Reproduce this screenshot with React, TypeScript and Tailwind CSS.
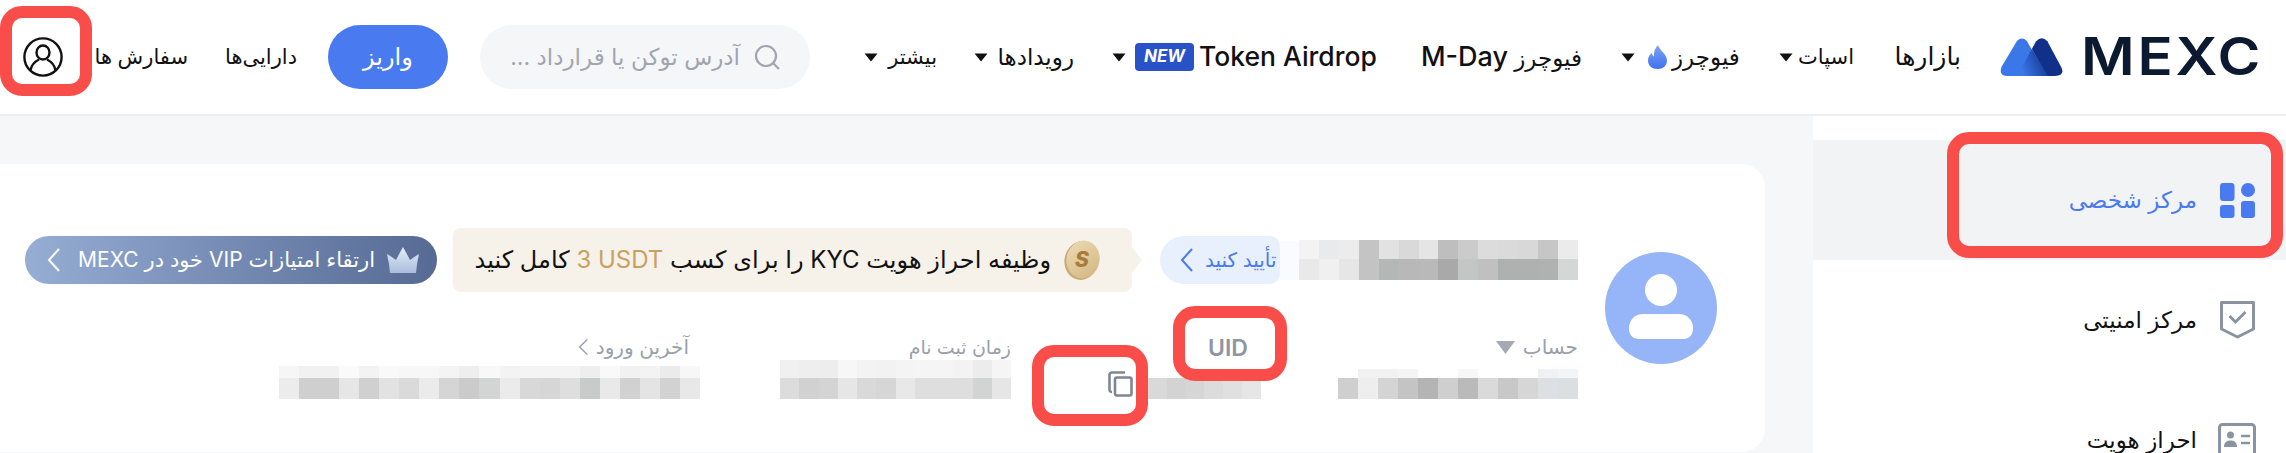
const FONT = "font-['Inter','DejaVu_Sans',sans-serif]";

function Caret({ className = "" }: { className?: string }) {
  return (
    <svg width="14" height="9" viewBox="0 0 14 9" className={`shrink-0 ${className}`}>
      <path d="M0.5 0.5H13.5L7 8.5Z" fill="#111" />
    </svg>
  );
}

function Mosaic({ top, bottom, topH, bottomH, width }: { top: string[]; bottom: string[]; topH: number; bottomH: number; width: number }) {
  const rows: [string[], number][] = [[top, topH], [bottom, bottomH]];
  return (
    <div className="flex flex-col blur-[0.6px]" style={{ width }}>
      {rows.map(([cells, h], i) => (
        <div key={i} className="flex" style={{ height: h }}>
          {cells.map((c, j) => (
            <div key={j} className="flex-1" style={{ background: c }} />
          ))}
        </div>
      ))}
    </div>
  );
}

function RedBox({ className }: { className: string }) {
  return <div className={`absolute border-[12px] border-[#f94d4a] rounded-[22px] ${className}`}><div className="w-full h-full" /></div>;
}

function Logo() {
  return (
    <div className="flex items-center ml-[39px] w-[262px] shrink-0">
      <svg width="63" height="38" viewBox="0 0 188 115" className="shrink-0">
        <defs>
          <linearGradient id="lg" x1="1" y1="0.3" x2="0" y2="0.7">
            <stop offset="0" stopColor="#10308a" />
            <stop offset="1" stopColor="#3b78e8" />
          </linearGradient>
        </defs>
        <path d="M3 88L50 9Q65-6 80 9L125 88 100 115H22Q-6 115 3 88Z" fill="#3a78ea" />
        <path d="M95 33L108 10Q125-8 142 10L185 90Q195 115 165 115H140Z" fill="#10308a" />
        <path d="M95 33L144 115H82Q52 113 65 88Z" fill="url(#lg)" />
      </svg>
      <span className="ml-[18px] origin-left scale-x-[1.12] text-[52px] leading-none font-semibold tracking-[2.5px] text-[#0b1a30] font-['Inter',sans-serif]">MEXC</span>
    </div>
  );
}

function Header() {
  return (
    <header className={`relative flex items-center h-[116px] bg-white border-b-2 border-[#eceef2] text-[23px] text-[#111] whitespace-nowrap ${FONT}`}>
      <svg width="40" height="40" viewBox="0 0 40 40" className="ml-[23px] shrink-0" fill="none" stroke="#111" strokeWidth="2.4">
        <circle cx="20" cy="20" r="18.6" />
        <ellipse cx="20" cy="15.5" rx="6.5" ry="7" />
        <path d="M7.5 33C9 26 13 24 16 22.5M32.5 33C31 26 27 24 24 22.5" />
      </svg>
      <div dir="rtl" className="ml-[31px] w-[94px] font-medium text-right text-[21px]">سفارش ها</div>
      <div dir="rtl" className="ml-[32px] w-[77px] font-medium text-right text-[21px]">دارایی‌ها</div>
      <div dir="rtl" className="ml-[31px] w-[120px] h-[64px] rounded-full bg-[#4a7af0] text-white font-medium text-[24px] flex items-center justify-center">واریز</div>
      <div className="ml-[32px] w-[330px] h-[64px] rounded-[32px] bg-[#f5f6f8] flex items-center justify-end pr-[30px] gap-[14px]">
        <span dir="rtl" className="text-[#a0a5b0] text-[23px] w-[232px] text-right">آدرس توکن یا قرارداد ...</span>
        <svg width="26" height="26" viewBox="0 0 26 26" fill="none" stroke="#a0a5b0" strokeWidth="2.2" className="shrink-0">
          <circle cx="12" cy="12" r="10" />
          <path d="M19.5 19.5L25 25" />
        </svg>
      </div>
      <div className="ml-[54px] w-[73px] flex items-center justify-between">
        <Caret />
        <span dir="rtl" className="text-[21px]">بیشتر</span>
      </div>
      <div className="ml-[37px] w-[100px] flex items-center justify-between">
        <Caret />
        <span dir="rtl">رویدادها</span>
      </div>
      <div className="ml-[38px] w-[265px] flex items-center">
        <Caret />
        <span className="ml-[9px] w-[59px] h-[28px] rounded-[4px] bg-[#2a52c8] text-white italic font-bold text-[17px] flex items-center justify-center">NEW</span>
        <span className="ml-[5px] font-medium text-[26.5px]">Token Airdrop</span>
      </div>
      <div dir="rtl" className="ml-[41px] w-[164px] text-right font-medium">
        <span>فیوچرز </span><span className="text-[27px]">M-Day</span>
      </div>
      <div className="ml-[39px] w-[119px] flex items-center">
        <Caret />
        <svg width="19" height="24" viewBox="0 0 19 24" className="ml-[13px] shrink-0">
          <defs>
            <linearGradient id="fl" x1="0" y1="0" x2="0" y2="1">
              <stop offset="0" stopColor="#7da4f8" />
              <stop offset="1" stopColor="#3f72ee" />
            </linearGradient>
          </defs>
          <path d="M10 0C11 5 19 9 19 15.5C19 20.5 15 24 9.5 24C4 24 0 20.5 0 15.5C0 12 2 9.5 3.5 8C4 10 5 11 6 11.5C5.500 7 7 3 10 0Z" fill="url(#fl)" />
        </svg>
        <span dir="rtl" className="ml-[5px]">فیوچرز</span>
      </div>
      <div className="ml-[39px] w-[75px] flex items-center justify-between">
        <Caret />
        <span dir="rtl" className="text-[21px]">اسپات</span>
      </div>
      <div dir="rtl" className="ml-[41px] w-[66px] text-right text-[25px]">بازارها</div>
      <Logo />
      <RedBox className="left-0 top-[6px] w-[92px] h-[90px]" />
    </header>
  );
}

function Chevron({ color, w = 14, h = 26, dir = "left" }: { color: string; w?: number; h?: number; dir?: string }) {
  return (
    <svg width={w} height={h} viewBox="0 0 14 26" fill="none" stroke={color} strokeWidth="2" className="shrink-0" preserveAspectRatio="none">
      <path d={dir === "left" ? "M12 2L2 13L12 24" : "M2 2L12 13L2 24"} />
    </svg>
  );
}

function Card() {
  return (
    <div className="relative flex-1 flex bg-white rounded-r-[24px] h-[288px] mt-[48px] mr-[48px] mb-[1px]">
      <div className="w-[1605px] shrink-0 flex flex-col pt-[64px]">
        <div className="flex items-center h-[64px]">
          <div className="ml-[25px] w-[412px] h-[48px] rounded-[24px] bg-gradient-to-r from-[#96add4] to-[#566a94] flex items-center text-white text-[21px] pl-[22px]">
            <Chevron color="#fff" />
            <span dir="rtl" className="ml-[17px] w-[297px] text-right whitespace-nowrap">ارتقاء امتیازات VIP خود در MEXC</span>
            <svg width="32" height="26" viewBox="0 0 32 26" className="ml-[12px] shrink-0">
              <defs>
                <linearGradient id="cr" x1="0" y1="0" x2="0" y2="1">
                  <stop offset="0" stopColor="#e6ecf6" />
                  <stop offset="1" stopColor="#a9bddc" />
                </linearGradient>
              </defs>
              <path d="M3 26Q2 15 0 7Q5 10 9 13Q12 7 16 0Q20 7 23 13Q27 10 32 7Q30 15 29 26Z" fill="url(#cr)" />
            </svg>
          </div>
          <div className="ml-[16px] w-[679px] h-[64px] rounded-[8px] bg-[#f6f2ea] flex items-center justify-end pr-[31px] shrink-0">
            <span dir="rtl" className="text-[24px] text-[#111] whitespace-nowrap">
              وظیفه احراز هویت KYC را برای کسب <span dir="ltr" className="inline-block text-[#c9a05f]">3 USDT</span> کامل کنید
            </span>
            <svg width="38" height="40" viewBox="0 0 38 40" className="ml-[12px] shrink-0">
              <defs>
                <linearGradient id="cn" x1="0" y1="0" x2="1" y2="1">
                  <stop offset="0" stopColor="#ecdcb5" />
                  <stop offset="1" stopColor="#d3b57e" />
                </linearGradient>
              </defs>
              <ellipse cx="18.500" cy="20.500" rx="17" ry="19.500" fill="#c8aa74" transform="rotate(12 18.500 20.500)" />
              <ellipse cx="20" cy="19.500" rx="16.500" ry="19" fill="url(#cn)" transform="rotate(12 20 19.500)" />
              <text x="19" y="27" textAnchor="middle" fontSize="21" fontWeight="800" fontStyle="italic" fill="#a87b3c" fontFamily="Inter, sans-serif">S</text>
            </svg>
          </div>
          <div className="w-0 h-0 border-y-[13px] border-y-transparent border-l-[10px] border-l-[#f6f2ea] shrink-0" />
          <div className="ml-[18px] w-[120px] h-[48px] rounded-l-[24px] rounded-r-[10px] bg-[#e9f0fd] flex items-center pl-[20px] gap-[11px] shrink-0">
            <Chevron color="#4a7af0" />
            <span dir="rtl" className="text-[20px] text-[#4a7af0] whitespace-nowrap">تأیید کنید</span>
          </div>
          <div className="w-[19px] h-[39px] bg-[#f9fbff] shrink-0" />
          <Mosaic
            width={279}
            topH={19}
            bottomH={21}
            top={["#f3f3f3", "#e9eaec", "#ececec", "#c4c4c4", "#e2e2e2", "#d9d9d9", "#e5e5e5", "#bebebe", "#cbcbcb", "#dcdcdc", "#dadada", "#d8d8d8", "#c6c6c6", "#ebebeb"]}
            bottom={["#e9e9ea", "#f0f0f1", "#e6e6e6", "#c3c3c3", "#b5b7b6", "#b8b8b8", "#b9b9b9", "#a9a9a9", "#c4c6c5", "#c0c0c0", "#afb1b0", "#afb1b0", "#b0b2b1", "#d4d7d6"]}
          />
        </div>
        <div className="flex items-end mt-[44px] h-[63px]">
          <div className="ml-[279px] w-[420px] flex flex-col shrink-0">
            <div className="flex items-center justify-end gap-[7px] text-[20px] leading-[20px] text-[#9aa0ac] pr-[10px] mb-[9px]">
              <Chevron color="#9aa0ac" w={11} h={18} />
              <span dir="rtl">آخرین ورود</span>
            </div>
            <Mosaic
              width={421}
              topH={12}
              bottomH={21}
              top={["#f6f6f6", "#f1f1f1", "#f1f1f1", "#fafafa", "#f3f3f3", "#f8f9f8", "#f7f7f7", "#f7f7f7", "#f4f4f4", "#eeeeee", "#f8f8f8", "#f3f3f3", "#f4f4f4", "#f4f4f4", "#f4f4f4", "#eeeeee", "#f8f9f8", "#f1f1f1", "#f3f3f3", "#ebebeb", "#f7f7f7"]}
              bottom={["#ececec", "#cfcfcf", "#cfcfcf", "#e6e6e6", "#d0d0d0", "#e2e2e2", "#dadada", "#ebebeb", "#d5d5d5", "#cbcbcb", "#d3d5d4", "#ebebeb", "#d8d8d8", "#d6d6d6", "#dedede", "#c9cbca", "#e9e9e9", "#d1d1d1", "#e4e4e4", "#d2d2d2", "#e8e8e8"]}
            />
          </div>
          <div className="ml-[81px] w-[231px] flex flex-col shrink-0">
            <div className="flex items-center justify-end text-[19px] leading-[20px] text-[#9aa0ac] mb-[2px]">
              <span dir="rtl">زمان ثبت نام</span>
            </div>
            <Mosaic
              width={231}
              topH={18}
              bottomH={21}
              top={["#f0f0f0", "#eeeeee", "#ededed", "#f7f7f7", "#f3f3f3", "#f2f2f2", "#f4f4f4", "#f5f5f5", "#f5f5f5", "#f3f3f3", "#ececec", "#f5f5f5"]}
              bottom={["#dcdcdc", "#d1d1d1", "#d4d4d4", "#e6e6e6", "#d9d9d9", "#d6d6d6", "#e8e8e8", "#dedede", "#dedede", "#dedede", "#d2d4d3", "#e6e6e6"]}
            />
          </div>
          <div className="ml-[97px] w-[153px] flex items-end shrink-0 relative h-[62px]">
            <svg width="25" height="26" viewBox="0 0 25 26" fill="none" stroke="#7f8792" strokeWidth="2.6" className="shrink-0 mb-[2px]">
              <path d="M4 21C2.500 21 1.500 20 1.500 18.500V4C1.500 2.500 2.500 1.500 4 1.500H17" />
              <rect x="7" y="6.500" width="16.500" height="18" rx="2" />
            </svg>
            <div className="ml-[15px] w-[113px] shrink-0">
              <Mosaic
                width={113}
                topH={2}
                bottomH={21}
                top={["#fbfbfb", "#fbfbfb", "#fbfbfb", "#fbfbfb", "#fbfbfb", "#fbfbfb"]}
                bottom={["#d9d9d9", "#d2d3d2", "#d6d6d6", "#dcdcdc", "#e0e0e0", "#e6e6e6"]}
              />
            </div>
            <div className="absolute left-[100px] top-[1px] text-[23px] leading-[20px] font-semibold text-[#8e95a2]">UID</div>
          </div>
          <div className="ml-[77px] w-[240px] flex flex-col shrink-0">
            <div className="flex items-center justify-end gap-[8px] text-[20px] leading-[20px] text-[#9aa0ac] mb-[12px]">
              <svg width="19" height="13" viewBox="0 0 19 13" className="shrink-0">
                <path d="M0 0H19L9.500 13Z" fill="#a5a9b4" />
              </svg>
              <span dir="rtl">حساب</span>
            </div>
            <Mosaic
              width={240}
              topH={9}
              bottomH={21}
              top={["#ffffff", "#f1f1f1", "#f1f1f1", "#f4f4f4", "#ffffff", "#ffffff", "#f7f7f7", "#ffffff", "#ffffff", "#ffffff", "#f0f1f3", "#f4f5f6"]}
              bottom={["#cfcfcf", "#eeeeee", "#d4d4d4", "#c4c4c4", "#b4b4b4", "#cfcfcf", "#bababa", "#dadada", "#c8c8c8", "#d6d6d6", "#dcdfe3", "#dcdfe2"]}
            />
          </div>
        </div>
      </div>
      <div className="relative self-center w-[112px] h-[112px] rounded-full bg-[#96b4f8] shrink-0">
        <svg width="64" height="66" viewBox="0 0 64 66" className="absolute left-[24px] top-[22px]" fill="#fff">
          <circle cx="32" cy="16" r="16" />
          <path d="M14 40H50C58 40 64 46 64 54V55C64 61 60 65 54 65H10C4 65 0 61 0 55V54C0 46 6 40 14 40Z" />
        </svg>
      </div>
      <RedBox className="left-[1173px] top-[142px] w-[114px] h-[75px]" />
      <RedBox className="left-[1032px] top-[181px] w-[116px] h-[81px]" />
    </div>
  );
}

function SideRow({ icon, label, active }: { icon: React.ReactNode; label: string; active?: boolean }) {
  return (
    <div className={`h-[120px] shrink-0 flex items-center justify-end pr-[30px] gap-[21px] text-[23px] ${active ? "bg-[#f2f3f5] text-[#4a7af0]" : "text-[#111]"}`}>
      <span dir="rtl" className="whitespace-nowrap">{label}</span>
      <div className="w-[38px] flex justify-center shrink-0">{icon}</div>
    </div>
  );
}

function Sidebar() {
  return (
    <aside className="relative w-[473px] shrink-0 bg-white pt-[24px] flex flex-col">
      <SideRow
        active
        label="مرکز شخصی"
        icon={
          <svg width="35" height="35" viewBox="0 0 35 35" fill="#4a7af0">
            <rect x="0" y="0" width="14.500" height="18" rx="3" />
            <circle cx="28" cy="7" r="7" />
            <rect x="0" y="22" width="14.500" height="13" rx="3" />
            <rect x="21" y="18" width="14" height="17" rx="3" />
          </svg>
        }
      />
      <SideRow
        label="مرکز امنیتی"
        icon={
          <svg width="35" height="38" viewBox="0 0 35 38" fill="none" stroke="#8b93a1" strokeWidth="3">
            <path d="M1.500 1.500H33.500V28L17.500 36L1.500 28Z" strokeLinejoin="round" />
            <path d="M9.500 15L15.500 21L25.500 11" />
          </svg>
        }
      />
      <SideRow
        label="احراز هویت"
        icon={
          <svg width="38" height="34" viewBox="0 0 38 34" fill="none" stroke="#8b93a1" strokeWidth="3">
            <rect x="1.500" y="1.500" width="35" height="31" rx="3" />
            <circle cx="12.500" cy="12" r="3.500" fill="#8b93a1" stroke="none" />
            <path d="M6 24C6 19 9 17.500 12.500 17.500C16 17.500 19 19 19 24Z" fill="#8b93a1" stroke="none" />
            <path d="M23 13H32M23 20H32" strokeWidth="2.500" />
          </svg>
        }
      />
      <RedBox className="left-[134px] top-[16px] w-[336px] h-[126px]" />
    </aside>
  );
}

export default function App() {
  return (
    <div className={`w-[2286px] h-[453px] overflow-hidden flex flex-col bg-[#f6f7f9] ${FONT}`}>
      <Header />
      <div className="flex-1 flex min-h-0">
        <Card />
        <Sidebar />
      </div>
    </div>
  );
}
